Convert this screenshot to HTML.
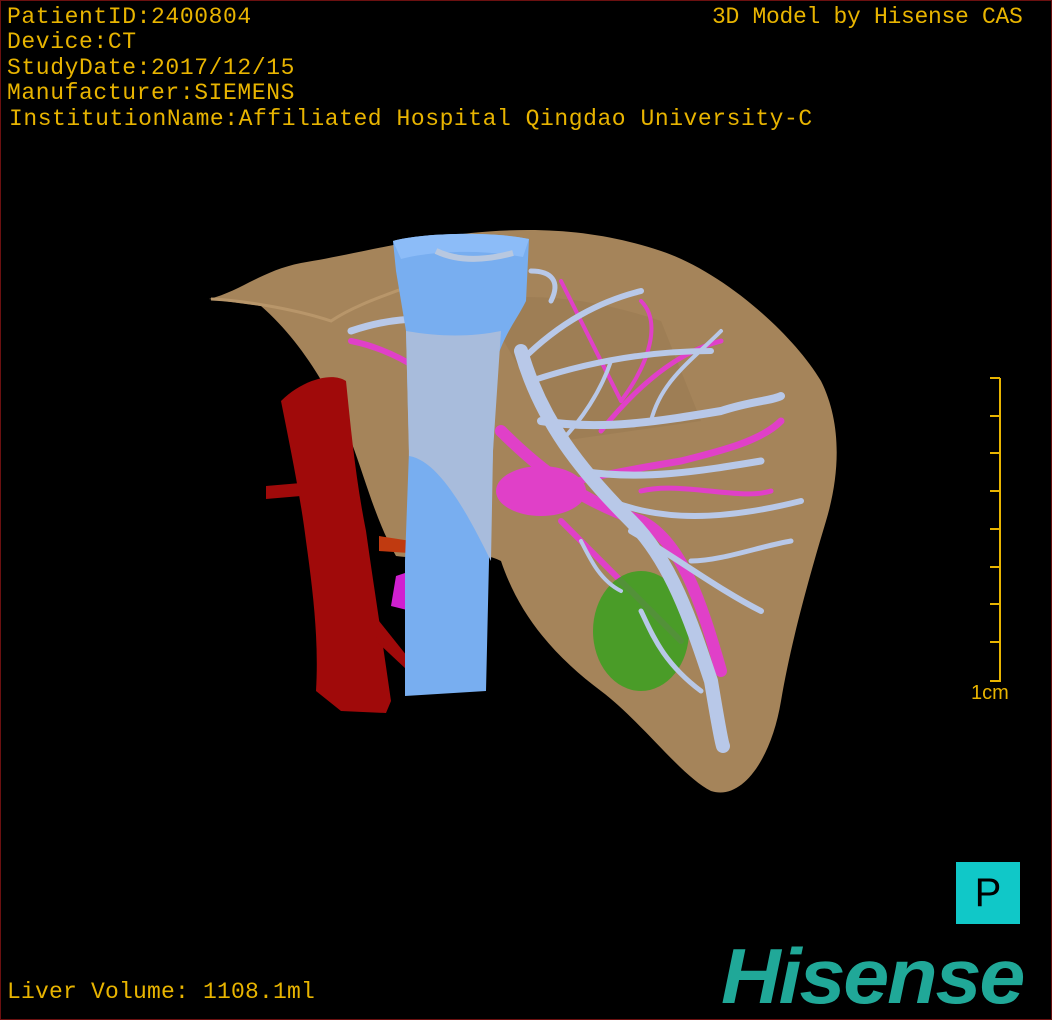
<!DOCTYPE html>
<html><head><meta charset="utf-8"><style>
html,body{margin:0;padding:0;background:#000;}
#w{position:relative;width:1050px;height:1018px;border:1px solid #6b1010;background:#000;overflow:hidden;font-family:"Liberation Mono",monospace;}
.t{position:absolute;color:#e8b400;font-size:23px;line-height:25px;white-space:nowrap;font-family:"Liberation Mono",monospace;}
</style></head><body><div id="w">
<svg width="1050" height="1018" style="position:absolute;left:0;top:0">
<path d="M208,298 C240,290 260,270 300,262 C360,252 400,240 470,232 C540,225 600,230 660,250 C720,270 790,330 820,380 C840,420 840,470 825,520 C810,570 790,640 780,700 C770,760 740,800 710,790 C680,775 640,720 600,690 C560,660 520,620 500,560 C470,545 430,560 395,555 C375,520 365,480 350,440 C330,390 300,340 260,305 Z" fill="#a5845a"/>
<path d="M210,298 C250,300 300,310 330,320 C360,300 400,290 420,280" stroke="#b8966a" stroke-width="3" fill="none"/>
<path d="M480,300 C540,290 600,300 660,320 L700,420 L560,440 Z" fill="#977750" opacity="0.5"/>
<g stroke="#e040c8" stroke-linecap="round" fill="none">
<path d="M500,430 C540,470 580,500 640,520 C680,540 700,600 720,670" stroke-width="12"/>
<path d="M520,500 C560,480 620,470 680,460 C720,450 760,440 780,420" stroke-width="7"/>
<path d="M560,520 C600,560 640,600 680,640" stroke-width="6"/>
<path d="M600,430 C640,380 680,350 720,340" stroke-width="5"/>
<path d="M350,340 C400,350 440,380 480,420" stroke-width="6"/>
<path d="M620,400 C650,360 660,320 640,300" stroke-width="4"/>
<path d="M640,490 C680,480 740,500 770,490" stroke-width="5"/>
<path d="M560,280 C580,320 600,360 620,400" stroke-width="4"/>
</g>
<ellipse cx="540" cy="490" rx="45" ry="25" fill="#e040c8"/>
<path d="M395,575 L410,570 L410,610 L390,605 Z" fill="#d020d0"/>
<ellipse cx="640" cy="630" rx="48" ry="60" fill="#3aa020" opacity="0.85"/>
<g stroke="#b8c8e8" stroke-linecap="round" fill="none">
<path d="M520,350 C540,420 580,470 630,520 C670,560 690,620 710,680 C715,710 720,740 722,745" stroke-width="14"/>
<path d="M540,420 C600,430 660,420 720,410 C750,400 770,400 780,395" stroke-width="8"/>
<path d="M580,470 C640,480 700,470 760,460" stroke-width="7"/>
<path d="M610,500 C660,520 720,520 800,500" stroke-width="6"/>
<path d="M630,530 C680,560 720,590 760,610" stroke-width="6"/>
<path d="M520,360 C560,320 600,300 640,290" stroke-width="6"/>
<path d="M530,380 C590,360 650,350 710,350" stroke-width="6"/>
<path d="M550,300 C560,280 550,270 530,270" stroke-width="5"/>
<path d="M350,330 C380,320 410,315 440,320" stroke-width="7"/>
<path d="M560,440 C580,420 600,390 610,360" stroke-width="4"/>
<path d="M690,560 C720,560 760,545 790,540" stroke-width="5"/>
<path d="M650,420 C660,380 690,360 720,330" stroke-width="4"/>
<path d="M580,540 C590,560 600,580 620,590" stroke-width="4"/>
<path d="M640,610 C650,630 660,660 700,690" stroke-width="5"/>
</g>
<path d="M280,400 C300,380 330,370 345,380 C350,430 355,480 365,530 C372,580 380,630 390,700 L385,712 L340,710 L315,690 C318,640 312,590 305,540 C300,500 292,460 280,400 Z" fill="#a00a0a"/>
<path d="M265,485 L300,482 L300,495 L265,498 Z" fill="#a00a0a"/>
<path d="M378,620 L410,660 L405,668 L375,640 Z" fill="#a00a0a"/>
<path d="M378,535 L410,540 L408,552 L378,550 Z" fill="#c03a10"/>
<path d="M392,240 C420,232 490,230 528,238 L525,300 C515,320 505,330 495,360 L492,450 L488,560 L485,690 L404,695 L404,560 L408,450 L405,330 L395,270 Z" fill="#78aef0"/>
<path d="M405,330 C440,336 470,336 500,330 L492,450 L490,560 C470,520 440,460 408,455 Z" fill="#a8bcdc"/>
<ellipse cx="493" cy="303" rx="18" ry="20" fill="#78aef0"/>
<path d="M392,240 C420,232 490,230 528,238 L522,256 C480,248 430,250 400,258 Z" fill="#8cbcf8"/>
<path d="M435,250 C460,262 490,258 512,252" stroke="#b8c8e0" stroke-width="6" fill="none"/>
</svg>
<div class="t" style="left:6px;top:4px;letter-spacing:0.6px">PatientID:2400804</div>
<div class="t" style="left:6px;top:29px;letter-spacing:0.6px">Device:CT</div>
<div class="t" style="left:6px;top:55px;letter-spacing:0.6px">StudyDate:2017/12/15</div>
<div class="t" style="left:6px;top:80px;letter-spacing:0.6px">Manufacturer:SIEMENS</div>
<div class="t" style="left:8px;top:106px;letter-spacing:0.55px">InstitutionName:Affiliated Hospital Qingdao University-C</div>
<div class="t" style="left:711px;top:4px;letter-spacing:-0.3px">3D Model by Hisense CAS</div>
<div class="t" style="left:6px;top:979px;letter-spacing:0.2px">Liver Volume: 1108.1ml</div>
<svg width="20" height="310" style="position:absolute;left:985px;top:375px">
<g stroke="#e8b400" stroke-width="2">
<line x1="14" y1="2" x2="14" y2="306"/>
<line x1="4" y1="2" x2="14" y2="2"/><line x1="4" y1="40" x2="14" y2="40"/><line x1="4" y1="77" x2="14" y2="77"/><line x1="4" y1="115" x2="14" y2="115"/><line x1="4" y1="153" x2="14" y2="153"/><line x1="4" y1="191" x2="14" y2="191"/><line x1="4" y1="228" x2="14" y2="228"/><line x1="4" y1="266" x2="14" y2="266"/><line x1="4" y1="305" x2="14" y2="305"/>
</g></svg>
<div class="t" style="left:970px;top:680px;font-size:20px;font-family:'Liberation Sans',sans-serif">1cm</div>
<div style="position:absolute;left:955px;top:861px;width:64px;height:62px;background:#10c8c8;color:#000;font-size:40px;line-height:62px;text-align:center;font-family:'Liberation Sans',sans-serif">P</div>
<div style="position:absolute;left:720px;top:936px;color:#20a898;font-size:78px;font-weight:bold;font-style:italic;line-height:78px;letter-spacing:-2px;font-family:'Liberation Sans',sans-serif;transform:scaleX(1.06);transform-origin:0 0">Hisense</div>
</div></body></html>
